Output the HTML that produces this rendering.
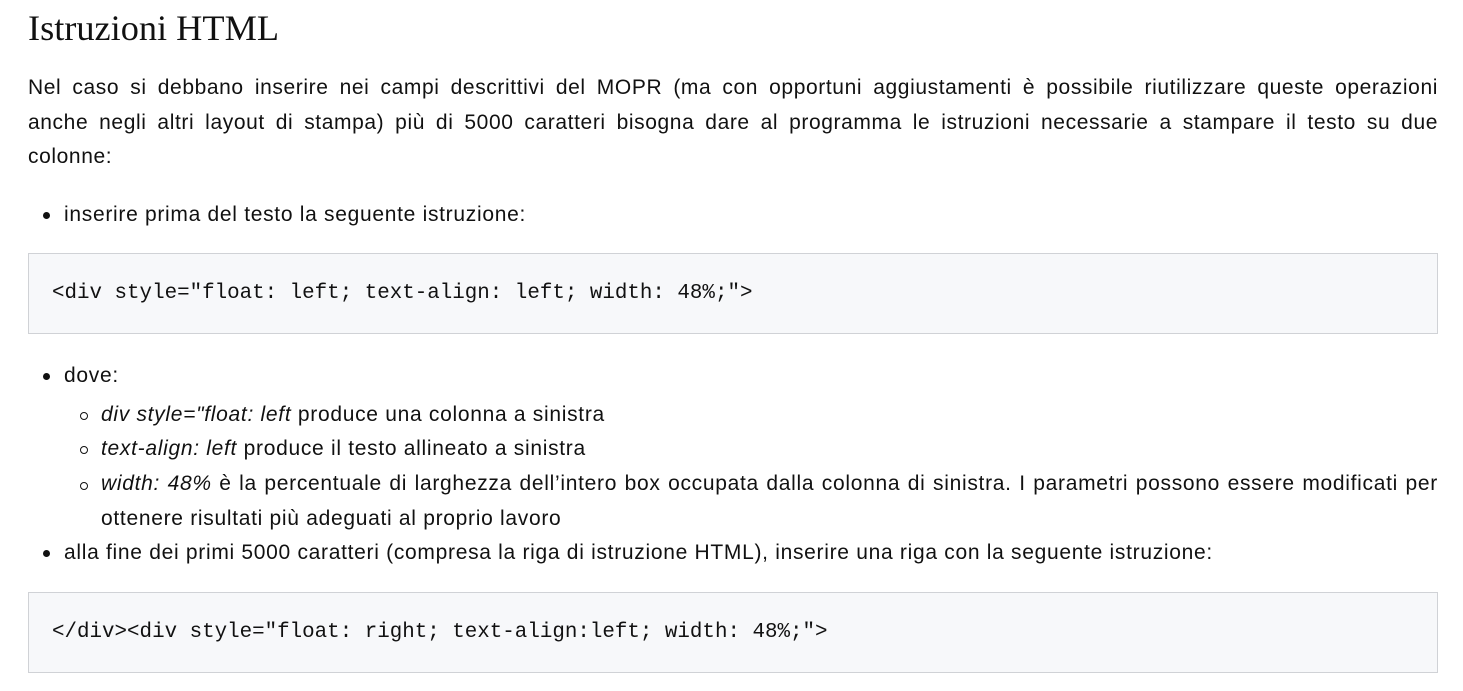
<!DOCTYPE html>
<html><head><meta charset="utf-8"><style>
body{margin:0;background:#fff;color:#111;font-family:"Liberation Sans",sans-serif;}
h1{font-family:"Liberation Serif",serif;font-weight:normal;font-size:36.3px;margin:0;position:absolute;top:7px;left:28px;}
.pl{position:absolute;left:28px;width:1410px;font-size:21px;letter-spacing:0.6px;line-height:34.5px;text-align:justify;text-align-last:justify;white-space:nowrap;}
.li{position:absolute;font-size:21px;letter-spacing:0.7px;line-height:34.5px;white-space:nowrap;}
.dot{position:absolute;width:7px;height:7px;border-radius:50%;background:#111;}
.circ{position:absolute;width:6px;height:6px;border-radius:50%;border:1px solid #111;}
.code{position:absolute;left:28px;width:1408px;height:79px;background:#f7f8fa;border:1px solid #d0d2d6;font-family:"Liberation Mono",monospace;font-size:20.85px;line-height:79px;}
.code span{position:absolute;left:23px;}
</style></head><body>
<h1>Istruzioni HTML</h1>
<div class="pl" style="top:71px">Nel caso si debbano inserire nei campi descrittivi del MOPR (ma con opportuni aggiustamenti è possibile riutilizzare queste operazioni</div>
<div class="pl" style="top:106px">anche negli altri layout di stampa) più di 5000 caratteri bisogna dare al programma le istruzioni necessarie a stampare il testo su due</div>
<div class="pl" style="top:140px;text-align-last:left">colonne:</div>
<div class="dot" style="left:43px;top:212px"></div>
<div class="li" style="left:64px;top:198px">inserire prima del testo la seguente istruzione:</div>
<div class="code" style="top:253px"><span>&lt;div style="float: left; text-align: left; width: 48%;"&gt;</span></div>
<div class="dot" style="left:43px;top:373px"></div>
<div class="li" style="left:64px;top:359px">dove:</div>
<div class="circ" style="left:80px;top:412px"></div>
<div class="li" style="left:101px;top:398px"><i>div style="float: left</i> produce una colonna a sinistra</div>
<div class="circ" style="left:80px;top:446px"></div>
<div class="li" style="left:101px;top:432px"><i>text-align: left</i> produce il testo allineato a sinistra</div>
<div class="circ" style="left:80px;top:482px"></div>
<div class="li" style="left:101px;top:467px;width:1337px;white-space:normal;text-align:justify"><i>width: 48%</i> è la percentuale di larghezza dell’intero box occupata dalla colonna di sinistra. I parametri possono essere modificati per ottenere risultati più adeguati al proprio lavoro</div>
<div class="dot" style="left:43px;top:550px"></div>
<div class="li" style="left:64px;top:536px">alla fine dei primi 5000 caratteri (compresa la riga di istruzione HTML), inserire una riga con la seguente istruzione:</div>
<div class="code" style="top:592px"><span>&lt;/div&gt;&lt;div style="float: right; text-align:left; width: 48%;"&gt;</span></div>
</body></html>
